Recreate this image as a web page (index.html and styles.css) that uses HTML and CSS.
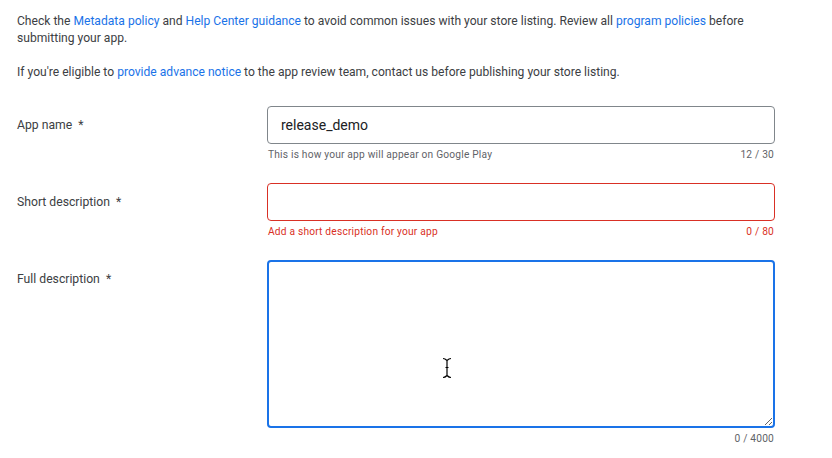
FILE: index.html
```html
<!DOCTYPE html>
<html lang="en">
<head>
<meta charset="utf-8">
<title>Store listing</title>
<link rel="stylesheet" href="styles.css">
</head>
<body>
<main class="page">
  <p class="intro">Check the <a href="#">Metadata policy</a> and <a href="#">Help Center guidance</a> to avoid common issues with your store listing. Review all <a href="#">program policies</a> before submitting your app.</p>
  <p class="intro second">If you're eligible to <a href="#">provide advance notice</a> to the app review team, contact us before publishing your store listing.</p>

  <div class="field">
    <label class="label" for="appname">App name&nbsp; *</label>
    <div class="control">
      <input id="appname" class="input" type="text" value="release_demo">
      <div class="hint"><span>This is how your app will appear on Google Play</span><span>12 / 30</span></div>
    </div>
  </div>

  <div class="field">
    <label class="label" for="short">Short description&nbsp; *</label>
    <div class="control">
      <input id="short" class="input error" type="text" value="">
      <div class="hint error-text"><span>Add a short description for your app</span><span>0 / 80</span></div>
    </div>
  </div>

  <div class="field">
    <label class="label" for="full">Full description&nbsp; *</label>
    <div class="control">
      <div class="area-wrap">
        <textarea id="full" class="area"></textarea>
        <svg class="cursor" width="10" height="22" viewBox="0 0 10 22" aria-hidden="true">
          <path d="M1 1.5 Q3 1.5 5 3.5 Q7 1.5 9 1.5 M5 3.5 V18.5 M1 20.5 Q3 20.5 5 18.5 Q7 20.5 9 20.5 M3.5 10.5 H6.5" fill="none" stroke="#fff" stroke-width="3" stroke-linecap="round"/>
          <path d="M1 1.5 Q3 1.5 5 3.5 Q7 1.5 9 1.5 M5 3.5 V18.5 M1 20.5 Q3 20.5 5 18.5 Q7 20.5 9 20.5 M3.5 10.5 H6.5" fill="none" stroke="#000" stroke-width="1.2"/>
        </svg>
      </div>
      <div class="hint"><span></span><span>0 / 4000</span></div>
    </div>
  </div>
</main>
</body>
</html>
```

FILE: styles.css
```css
* { box-sizing: border-box; }

html, body {
  margin: 0;
  padding: 0;
  background: #ffffff;
}

body {
  font-family: Roboto, "Liberation Sans", Arial, sans-serif;
  color: #3c4043;
}

.page {
  width: 792px;
  padding: 13px 17px 0 17px;
}

.intro {
  margin: 0;
  font-size: 12.1px;
  line-height: 17px;
  color: #3c4043;
  max-width: 758px;
}

.intro.second {
  margin-top: 17px;
  margin-bottom: 25px;
}

.intro a {
  color: #1a73e8;
  text-decoration: none;
}

.field {
  display: grid;
  grid-template-columns: 250px 508px;
  margin-bottom: 21px;
}

.label {
  font-size: 12.2px;
  line-height: 38px;
  color: #3c4043;
}

.control {
  display: flex;
  flex-direction: column;
}

.input {
  display: block;
  width: 508px;
  height: 38px;
  margin: 0;
  padding: 0 13px;
  border: 1px solid #80868b;
  border-radius: 4px;
  font-family: Roboto, "Liberation Sans", Arial, sans-serif;
  font-size: 14px;
  color: #202124;
  background: #fff;
  outline: none;
}

.input.error {
  border-color: #d93025;
}

.hint {
  display: flex;
  justify-content: space-between;
  margin-top: 4px;
  padding: 0 1px;
  font-size: 10.2px;
  letter-spacing: 0.2px;
  line-height: 14px;
  color: #5f6368;
}

.hint.error-text {
  color: #d93025;
}

.area-wrap {
  position: relative;
  height: 168px;
}

.area {
  display: block;
  width: 508px;
  height: 168px;
  margin: 0;
  padding: 12px;
  border: 2px solid #1a73e8;
  border-radius: 4px;
  background: #fff;
  outline: none;
  resize: vertical;
  font-family: Roboto, "Liberation Sans", Arial, sans-serif;
  font-size: 14px;
}

.cursor {
  position: absolute;
  left: 175px;
  top: 97px;
  pointer-events: none;
}
```
